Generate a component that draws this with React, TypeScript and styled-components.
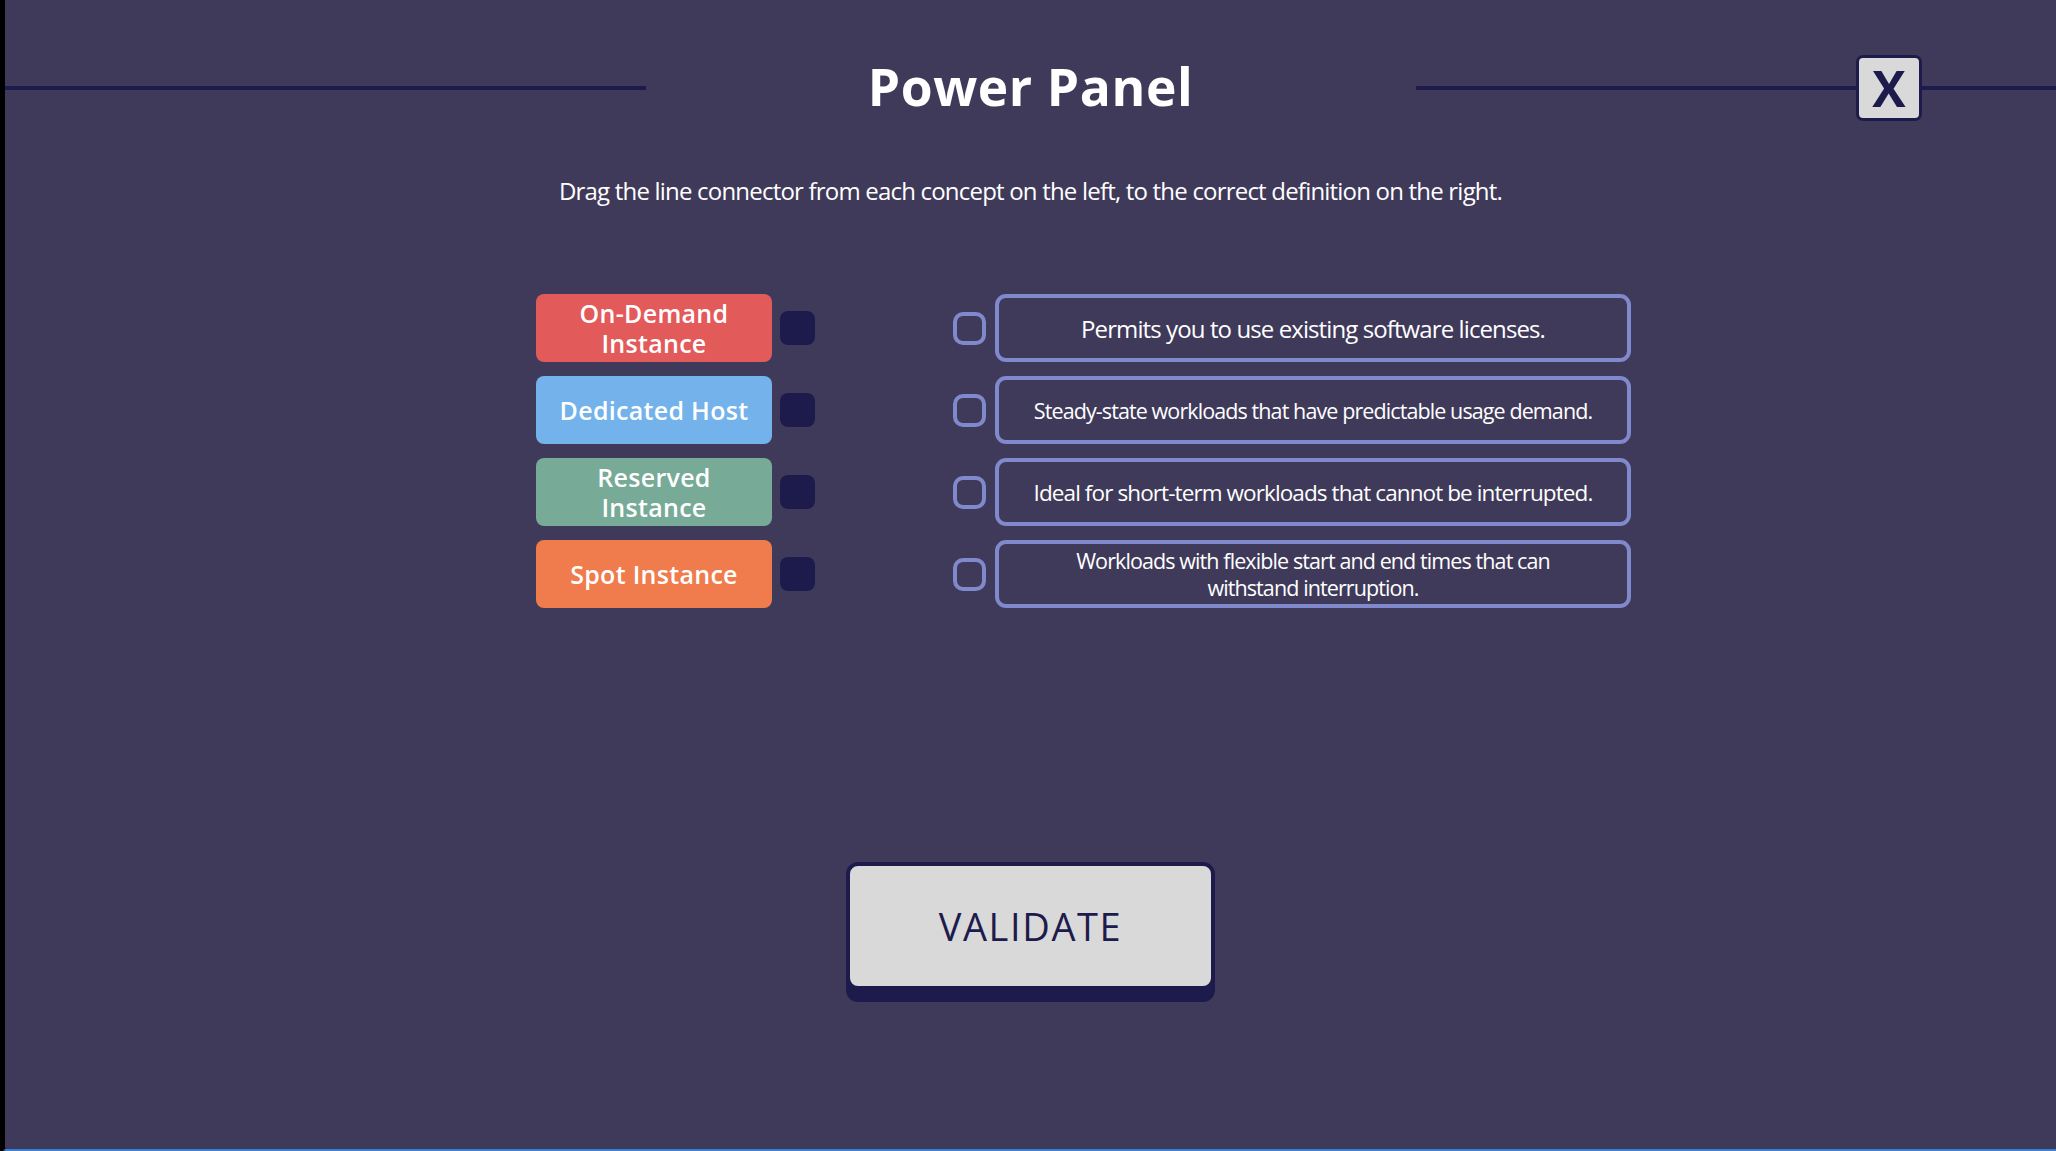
import styled, { createGlobalStyle } from 'styled-components';

const GlobalStyle = createGlobalStyle`
  html, body {
    margin: 0;
    padding: 0;
    background: #000;
  }
  * {
    box-sizing: border-box;
  }
`;

interface Pair {
  concept: string;
  color: string;
  definition: string;
  size: number;
  inset: number;
}

const pairs: Pair[] = [
  {
    concept: 'On-Demand Instance',
    color: '#e35a5b',
    definition: 'Permits you to use existing software licenses.',
    size: 24,
    inset: 14,
  },
  {
    concept: 'Dedicated Host',
    color: '#73b2ea',
    definition: 'Steady-state workloads that have predictable usage demand.',
    size: 21.5,
    inset: 14,
  },
  {
    concept: 'Reserved Instance',
    color: '#77aa97',
    definition: 'Ideal for short-term workloads that cannot be interrupted.',
    size: 22.5,
    inset: 14,
  },
  {
    concept: 'Spot Instance',
    color: '#f07b4c',
    definition:
      'Workloads with flexible start and end times that can withstand interruption.',
    size: 21.5,
    inset: 70,
  },
];

export default function App() {
  return (
    <>
      <GlobalStyle />
      <Frame>
        <Header>
          <Rule />
          <Title>Power Panel</Title>
          <Rule />
          <CloseButton aria-label="close">X</CloseButton>
        </Header>
        <Instructions>
          Drag the line connector from each concept on the left, to the correct
          definition on the right.
        </Instructions>
        <Board>
          {pairs.map((p) => (
            <Row key={p.concept}>
              <LeftSide>
                <Concept $color={p.color}>{p.concept}</Concept>
                <Handle />
              </LeftSide>
              <RightSide>
                <Target />
                <Definition $size={p.size} $inset={p.inset}>
                  {p.definition}
                </Definition>
              </RightSide>
            </Row>
          ))}
        </Board>
        <Footer>
          <ValidateButton>VALIDATE</ValidateButton>
        </Footer>
      </Frame>
    </>
  );
}

const Frame = styled.div`
  width: 2056px;
  height: 1151px;
  background: #3f3a5a;
  border-left: 5px solid #000;
  border-bottom: 2px solid #3b7fd0;
  border-bottom-left-radius: 6px;
  display: flex;
  flex-direction: column;
  font-family: 'Open Sans', 'Noto Sans', sans-serif;
  color: #ffffff;
  overflow: hidden;
`;

const Header = styled.div`
  position: relative;
  height: 176px;
  display: flex;
  align-items: center;
`;

const Rule = styled.div`
  flex: 1;
  height: 4px;
  background: #1d1b4b;
`;

const Title = styled.h1`
  width: 770px;
  margin: 0;
  text-align: center;
  font-weight: 700;
  font-size: 51.5px;
  line-height: 60px;
  letter-spacing: 0.6px;
  color: #ffffff;
  transform: translateY(-2px);
`;

const CloseButton = styled.button`
  position: absolute;
  top: 55px;
  right: 134px;
  width: 66px;
  height: 66px;
  padding: 0;
  display: flex;
  align-items: center;
  justify-content: center;
  background: #d9d9d9;
  border: 3px solid #1d1b4b;
  border-radius: 7px;
  font-family: 'Open Sans', sans-serif;
  font-weight: 700;
  font-size: 50px;
  line-height: 1;
  color: #1d1b4b;
  cursor: pointer;
`;

const Instructions = styled.p`
  margin: 0;
  text-align: center;
  font-size: 24px;
  line-height: 30px;
  letter-spacing: -0.8px;
  color: #ffffff;
`;

const Board = styled.div`
  width: 1095px;
  margin: 88px 0 0 531px;
  display: flex;
  flex-direction: column;
  gap: 14px;
`;

const Row = styled.div`
  height: 68px;
  display: flex;
  align-items: center;
`;

const LeftSide = styled.div`
  display: flex;
  align-items: center;
  gap: 8px;
`;

const RightSide = styled.div`
  margin-left: auto;
  display: flex;
  align-items: center;
  gap: 9px;
`;

const Concept = styled.div<{ $color: string }>`
  width: 236px;
  height: 68px;
  border-radius: 8px;
  background: ${(p) => p.$color};
  display: flex;
  align-items: center;
  justify-content: center;
  text-align: center;
  padding: 0 18px;
  font-weight: 600;
  font-size: 25px;
  line-height: 30px;
  letter-spacing: 0.3px;
  color: #ffffff;
`;

const Handle = styled.div`
  width: 35px;
  height: 34px;
  border-radius: 8px;
  background: #1d1b4b;
`;

const Target = styled.div`
  width: 33px;
  height: 33px;
  border: 4px solid #7f89cb;
  border-radius: 10px;
`;

const Definition = styled.div<{ $size: number; $inset: number }>`
  width: 636px;
  height: 68px;
  border: 4px solid #7f89cb;
  border-radius: 11px;
  display: flex;
  align-items: center;
  justify-content: center;
  text-align: center;
  padding: 0 ${(p) => p.$inset}px;
  font-size: ${(p) => p.$size}px;
  line-height: 27px;
  letter-spacing: -0.9px;
  color: #ffffff;
`;

const Footer = styled.div`
  margin-top: 254px;
  display: flex;
  justify-content: center;
`;

const ValidateButton = styled.button`
  width: 369px;
  height: 128px;
  background: #d9d9d9;
  border: 4px solid #1d1b4b;
  border-radius: 12px;
  box-shadow: 0 12px 0 #1d1b4b;
  font-family: 'Open Sans', sans-serif;
  font-weight: 500;
  font-size: 38px;
  letter-spacing: 1.6px;
  color: #1d1b4b;
  cursor: pointer;
`;
